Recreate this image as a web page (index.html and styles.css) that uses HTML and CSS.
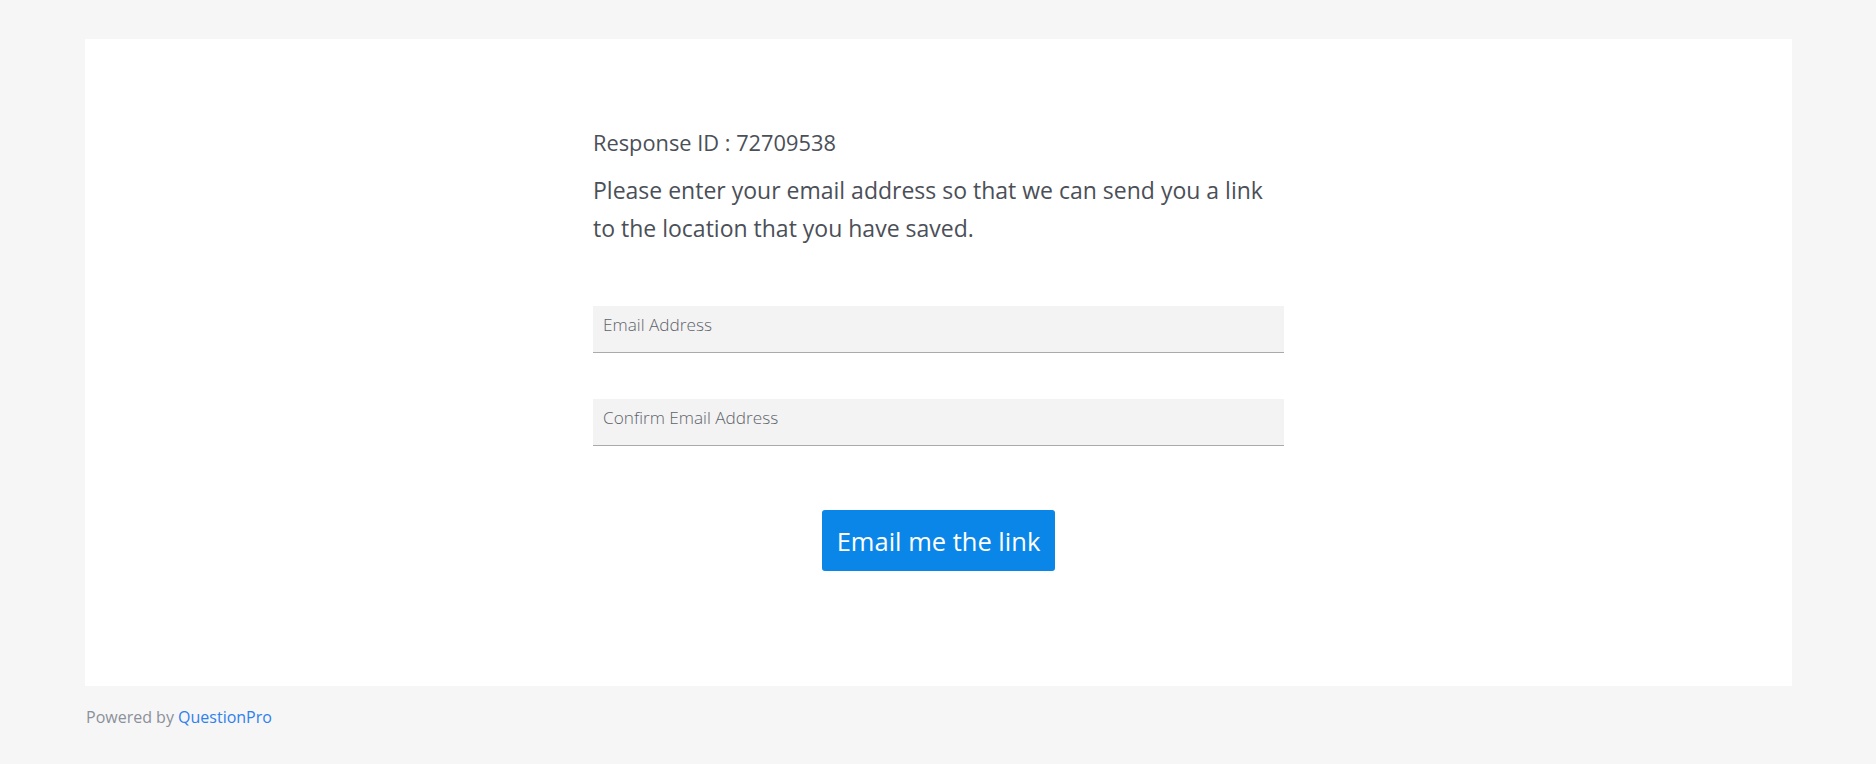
FILE: index.html
```html
<!DOCTYPE html>
<html lang="en">
<head>
<meta charset="utf-8">
<title>Save and continue later</title>
<link rel="stylesheet" href="styles.css">
</head>
<body>
<div class="page">
  <main class="card">
    <div class="content">
      <p class="response-id">Response ID : 72709538</p>
      <p class="intro">Please enter your email address so that we can send you a link to the location that you have saved.</p>
      <form class="form">
        <input class="field" type="email" placeholder="Email Address">
        <input class="field" type="email" placeholder="Confirm Email Address">
        <div class="actions"><button type="button" class="btn">Email me the link</button></div>
      </form>
    </div>
  </main>
  <footer class="footer">Powered by <a href="#" class="brand">QuestionPro</a></footer>
</div>
</body>
</html>
```
FILE: styles.css
```css
* { box-sizing: border-box; }
html, body { margin: 0; padding: 0; }
body {
  background: #f6f6f6;
  font-family: "Open Sans", "Noto Sans", sans-serif;
  color: #4b4f58;
}
.page { padding: 39px 84px 0 85px; }
.card {
  background: #fff;
  height: 647px;
  padding-top: 89px;
  display: flex;
  justify-content: center;
}
.content { width: 691px; }
.response-id { margin: 0; font-size: 21.8px; line-height: 30px; }
.intro { margin: 13px 0 0; font-size: 23px; line-height: 38px; }
.form { margin-top: 59px; display: flex; flex-direction: column; gap: 46px; }
.field {
  display: block;
  width: 100%;
  height: 47px;
  border: 0;
  border-bottom: 1px solid #aaaaaa;
  background: #f3f3f3;
  padding: 0 10px 9px;
  font-family: inherit;
  font-size: 17.2px;
  font-weight: 300;
  color: #4b4f58;
  outline: none;
}
.field::placeholder { color: #5f636b; opacity: 1; }
.actions { display: flex; justify-content: center; margin-top: 18px; }
.btn {
  height: 61px;
  padding: 0 15px;
  border: 0;
  border-radius: 3px;
  background: #0a86e8;
  color: #fff;
  font-family: inherit;
  font-size: 25.5px;
  cursor: pointer;
}
.footer { padding: 20px 1px; font-size: 16px; color: #8b909a; }
.brand { color: #2f80ed; text-decoration: none; }
```
